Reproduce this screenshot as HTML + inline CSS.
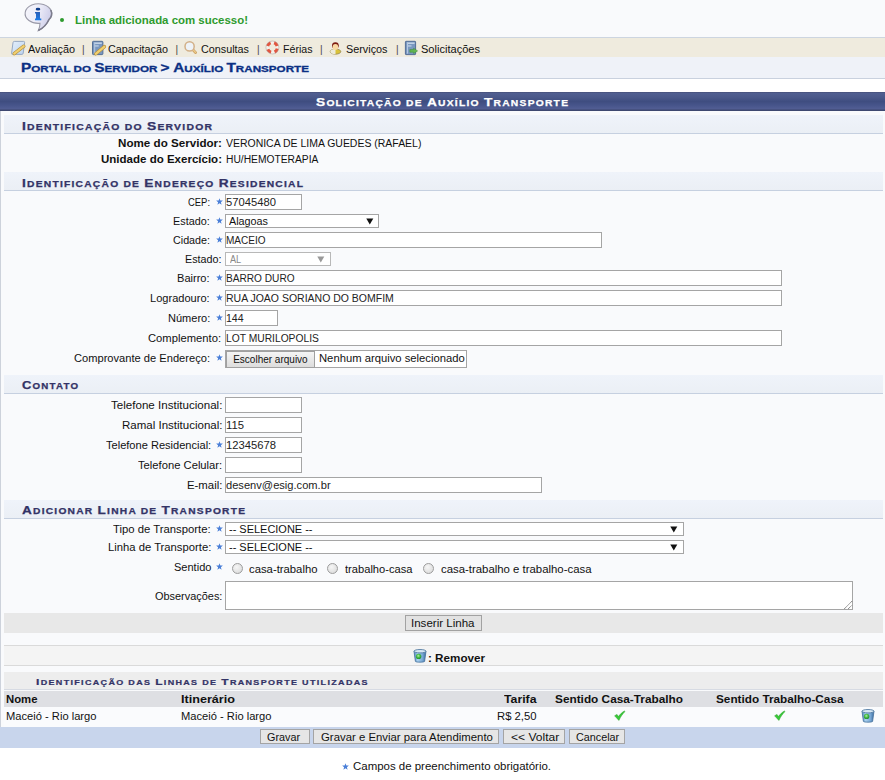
<!DOCTYPE html>
<html><head><meta charset="utf-8"><style>
html,body{margin:0;padding:0;}
body{width:885px;height:780px;overflow:hidden;position:relative;background:#fff;font-family:"Liberation Sans",sans-serif;}
.t{position:absolute;white-space:nowrap;}
</style></head><body>
<div style="position:absolute;left:0px;top:0px;width:885px;height:37px;background:#F9FAFC;"></div>
<div style="position:absolute;left:0px;top:37px;width:885px;height:1px;background:#CDD5E0;"></div>
<div style="position:absolute;left:60px;top:18px;width:4px;height:4px;background:#2E9A2E;border-radius:50%;"></div>
<div style="position:absolute;left:0px;top:38px;width:885px;height:19px;background:#EFEBDE;"></div>
<div style="position:absolute;left:0px;top:57px;width:885px;height:21px;background:#EFF2F8;"></div>
<div style="position:absolute;left:0px;top:78px;width:885px;height:1px;background:#C9D1DE;"></div>
<div style="position:absolute;left:0px;top:92px;width:885px;height:19px;background:linear-gradient(#465079 0px,#505E90 1.5px,#4B598A 5px,#3F4D80 9.5px,#46548A 13px,#505C92 16.5px,#3E4870 18.5px,#3E4870 19px);"></div>
<div style="position:absolute;left:0px;top:111px;width:885px;height:616px;background:#F9FAFC;"></div>
<div style="position:absolute;left:0px;top:111px;width:1px;height:616px;background:#CDD2DB;"></div>
<div style="position:absolute;left:4px;top:115px;width:879px;height:18px;background:linear-gradient(#EFF3FA,#EBEFF5);"></div>
<div style="position:absolute;left:4px;top:133px;width:879px;height:1px;background:#C6D0E0;"></div>
<div style="position:absolute;left:4px;top:172px;width:879px;height:18px;background:linear-gradient(#EFF3FA,#EBEFF5);"></div>
<div style="position:absolute;left:4px;top:190px;width:879px;height:1px;background:#C6D0E0;"></div>
<div style="position:absolute;left:225px;top:194px;width:77px;height:16px;background:#fff;border:1px solid #A5A5A5;box-sizing:border-box;"></div>
<div style="position:absolute;left:225px;top:214px;width:154px;height:14px;background:#fff;border:1px solid #A5A5A5;box-sizing:border-box;"></div>
<div style="position:absolute;left:225px;top:232px;width:377px;height:16px;background:#fff;border:1px solid #A5A5A5;box-sizing:border-box;"></div>
<div style="position:absolute;left:225px;top:252px;width:106px;height:14px;background:#fff;border:1px solid #B8B8B8;box-sizing:border-box;"></div>
<div style="position:absolute;left:225px;top:270px;width:557px;height:16px;background:#fff;border:1px solid #A5A5A5;box-sizing:border-box;"></div>
<div style="position:absolute;left:225px;top:290px;width:557px;height:16px;background:#fff;border:1px solid #A5A5A5;box-sizing:border-box;"></div>
<div style="position:absolute;left:225px;top:310px;width:53px;height:16px;background:#fff;border:1px solid #A5A5A5;box-sizing:border-box;"></div>
<div style="position:absolute;left:225px;top:330px;width:557px;height:16px;background:#fff;border:1px solid #A5A5A5;box-sizing:border-box;"></div>
<div style="position:absolute;left:225px;top:350px;width:242px;height:18px;background:#fff;border:1px solid #A5A5A5;box-sizing:border-box;"></div>
<div style="position:absolute;left:226px;top:351px;width:89px;height:17px;background:linear-gradient(#F4F4F4,#DDDDDD);border:1px solid #A0A0A0;box-sizing:border-box;"></div>
<div style="position:absolute;left:4px;top:375px;width:879px;height:18px;background:linear-gradient(#EFF3FA,#EBEFF5);"></div>
<div style="position:absolute;left:4px;top:393px;width:879px;height:1px;background:#C6D0E0;"></div>
<div style="position:absolute;left:225px;top:397px;width:77px;height:16px;background:#fff;border:1px solid #A5A5A5;box-sizing:border-box;"></div>
<div style="position:absolute;left:225px;top:417px;width:77px;height:16px;background:#fff;border:1px solid #A5A5A5;box-sizing:border-box;"></div>
<div style="position:absolute;left:225px;top:437px;width:77px;height:16px;background:#fff;border:1px solid #A5A5A5;box-sizing:border-box;"></div>
<div style="position:absolute;left:225px;top:457px;width:77px;height:16px;background:#fff;border:1px solid #A5A5A5;box-sizing:border-box;"></div>
<div style="position:absolute;left:225px;top:477px;width:317px;height:16px;background:#fff;border:1px solid #A5A5A5;box-sizing:border-box;"></div>
<div style="position:absolute;left:4px;top:500px;width:879px;height:18px;background:linear-gradient(#EFF3FA,#EBEFF5);"></div>
<div style="position:absolute;left:4px;top:518px;width:879px;height:1px;background:#C6D0E0;"></div>
<div style="position:absolute;left:225px;top:522px;width:459px;height:14px;background:#fff;border:1px solid #A5A5A5;box-sizing:border-box;"></div>
<div style="position:absolute;left:225px;top:540px;width:459px;height:14px;background:#fff;border:1px solid #A5A5A5;box-sizing:border-box;"></div>
<div style="position:absolute;left:225px;top:581px;width:628px;height:29px;background:#fff;border:1px solid #A5A5A5;box-sizing:border-box;"></div>
<div style="position:absolute;left:4px;top:613px;width:879px;height:20px;background:#E8E8E8;"></div>
<div style="position:absolute;left:405px;top:615px;width:77px;height:16px;background:#E2E2E2;border:1px solid #A2A2A2;box-sizing:border-box;"></div>
<div style="position:absolute;left:4px;top:645px;width:879px;height:1px;background:#DADADA;"></div>
<div style="position:absolute;left:4px;top:646px;width:879px;height:19px;background:#F4F4F4;"></div>
<div style="position:absolute;left:4px;top:665px;width:879px;height:1px;background:#DADADA;"></div>
<div style="position:absolute;left:4px;top:672px;width:879px;height:17px;background:#EDEDED;"></div>
<div style="position:absolute;left:4px;top:689px;width:879px;height:1px;background:#D7DBE3;"></div>
<div style="position:absolute;left:4px;top:691px;width:879px;height:16px;background:#DEDFE3;"></div>
<div style="position:absolute;left:4px;top:707px;width:879px;height:20px;background:#FAFBFD;"></div>
<div style="position:absolute;left:0px;top:727px;width:885px;height:21px;background:#C8D5EC;"></div>
<div style="position:absolute;left:260px;top:729px;width:50px;height:15px;background:#E6E6E6;border:1px solid #A4A4A4;box-sizing:border-box;"></div>
<div style="position:absolute;left:313px;top:729px;width:186px;height:15px;background:#E6E6E6;border:1px solid #A4A4A4;box-sizing:border-box;"></div>
<div style="position:absolute;left:503px;top:729px;width:62px;height:15px;background:#E6E6E6;border:1px solid #A4A4A4;box-sizing:border-box;"></div>
<div style="position:absolute;left:569px;top:729px;width:56px;height:15px;background:#E6E6E6;border:1px solid #A4A4A4;box-sizing:border-box;"></div>
<svg style="position:absolute;left:20px;top:0.5px" width="40" height="35" viewBox="0 0 40 35">
<defs><linearGradient id="ig" x1="0" y1="0" x2="1" y2="0.3"><stop offset="0" stop-color="#F6F6FC"/><stop offset="0.55" stop-color="#ECECF8"/><stop offset="1" stop-color="#CFCFEA"/></linearGradient>
<linearGradient id="ii" x1="0" y1="0" x2="0" y2="1"><stop offset="0" stop-color="#2A5FB8"/><stop offset="1" stop-color="#1C7BE6"/></linearGradient></defs>
<path d="M20 22.3 A13.3 9.8 0 1 1 29 18.5 C27 23 22.5 27.5 18.3 29.5 C19.5 27 20 24.5 20 22.3 Z" fill="url(#ig)" stroke="#9A9AA8" stroke-width="1.1"/>
<path d="M30.8 9 C32.5 12.5 31.5 16.5 29 18.5 C27 23 22.5 27.5 18.3 29.5" fill="none" stroke="#7C7C8C" stroke-width="1.6"/>
<ellipse cx="18" cy="8.2" rx="2.3" ry="1.4" fill="#0E3C8A"/>
<path d="M15 11 H20 V17.6 H21.3 V19.3 H15 V17.6 H16 V12.4 H15 Z" fill="url(#ii)"/>
</svg>
<svg style="position:absolute;left:8px;top:38px" width="40" height="20" viewBox="0 0 40 20"><defs><linearGradient id="p1" x1="0" y1="0" x2="1" y2="1"><stop offset="0" stop-color="#E6F0FB"/><stop offset="1" stop-color="#B9D2EE"/></linearGradient></defs>
<path d="M6.3 3.4 H15.6 Q16.8 3.4 16.6 4.6 L15.2 15.3 Q15 16.4 13.9 16.4 H4.6 Q3.4 16.4 3.6 15.2 L5 4.6 Q5.2 3.4 6.3 3.4 Z" fill="url(#p1)" stroke="#8CA0BE" stroke-width="0.9"/>
<path d="M6.2 15.6 L15.8 8.2" stroke="#B58F3A" stroke-width="3.4" stroke-linecap="round"/>
<path d="M6.2 15.6 L15.8 8.2" stroke="#F1D070" stroke-width="2.2" stroke-linecap="round"/></svg>
<svg style="position:absolute;left:88px;top:38px" width="40" height="20" viewBox="0 0 40 20"><rect x="4.5" y="3.3" width="10.4" height="13.3" rx="0.8" fill="#7A98C0" stroke="#4C6892" stroke-width="0.9"/>
<rect x="6.2" y="4.6" width="7.6" height="1.1" fill="#E2ECF7"/><rect x="6.2" y="7.4" width="4.5" height="1.1" fill="#C9D9EC"/><rect x="6.2" y="4.6" width="1" height="11" fill="#B5C9E2"/>
<path d="M7.8 15.8 L16.4 8.6" stroke="#B58F3A" stroke-width="3.4" stroke-linecap="round"/>
<path d="M7.8 15.8 L16.4 8.6" stroke="#F1D070" stroke-width="2.2" stroke-linecap="round"/></svg>
<svg style="position:absolute;left:180px;top:38px" width="40" height="20" viewBox="0 0 40 20"><path d="M12.8 11.6 L15.6 14.6" stroke="#C99A5A" stroke-width="2.8" stroke-linecap="round"/>
<path d="M12.8 11.6 L15.6 14.6" stroke="#EBCB8A" stroke-width="1.4" stroke-linecap="round"/>
<circle cx="9.6" cy="8.4" r="4.6" fill="#EEF3F8" stroke="#D2B088" stroke-width="1.5"/></svg>
<svg style="position:absolute;left:262px;top:38px" width="40" height="20" viewBox="0 0 40 20"><circle cx="10.4" cy="9.5" r="5" fill="none" stroke="#F4F0EA" stroke-width="3"/>
<circle cx="10.4" cy="9.5" r="5" fill="none" stroke="#E2553F" stroke-width="3.1" stroke-dasharray="4.2 3.65" stroke-dashoffset="-1.2"/>
<circle cx="10.4" cy="9.5" r="6.5" fill="none" stroke="#A89C98" stroke-width="0.5"/></svg>
<svg style="position:absolute;left:326px;top:38px" width="40" height="20" viewBox="0 0 40 20"><ellipse cx="9.5" cy="13.6" rx="5.3" ry="2.6" fill="#D9C23A" stroke="#8C8050" stroke-width="0.7"/>
<path d="M4.3 13.6 A5.3 2.6 0 0 0 9.5 16.2 V11 A5.3 2.6 0 0 0 4.3 13.6 Z" fill="#EDEBDC"/>
<circle cx="9.4" cy="7.6" r="3.4" fill="#7E1C12"/>
<ellipse cx="9.4" cy="9" rx="2.8" ry="3" fill="#F9D9A2"/></svg>
<svg style="position:absolute;left:400px;top:38px" width="40" height="20" viewBox="0 0 40 20"><rect x="5.4" y="3.3" width="10.2" height="13.3" rx="0.6" fill="#7A98C0" stroke="#4A6590" stroke-width="0.9"/>
<rect x="7" y="4.6" width="7.6" height="1.1" fill="#E2ECF7"/><rect x="7" y="7.4" width="4.5" height="1.1" fill="#C9D9EC"/><rect x="7" y="4.6" width="1" height="11" fill="#B5C9E2"/>
<path d="M9.8 11.6 H13.6 V10.2 L17.6 12.9 L13.6 15.6 V14.2 H9.8 Z" fill="#63B652" stroke="#3D8C34" stroke-width="0.5"/></svg>
<svg style="position:absolute;left:216px;top:198px" width="7" height="7" viewBox="0 0 10 10"><path d="M5 0.3 L6.2 3.6 L9.8 3.7 L7 5.9 L8 9.5 L5 7.4 L2 9.5 L3 5.9 L0.2 3.7 L3.8 3.6 Z" fill="#4A7FD8"/></svg>
<svg style="position:absolute;left:216px;top:217px" width="7" height="7" viewBox="0 0 10 10"><path d="M5 0.3 L6.2 3.6 L9.8 3.7 L7 5.9 L8 9.5 L5 7.4 L2 9.5 L3 5.9 L0.2 3.7 L3.8 3.6 Z" fill="#4A7FD8"/></svg>
<svg style="position:absolute;left:366px;top:217.5px" width="8" height="7" viewBox="0 0 8 7"><path d="M0.3 0.6 H7.3 L3.8 6.6 Z" fill="#111"/></svg>
<svg style="position:absolute;left:216px;top:236px" width="7" height="7" viewBox="0 0 10 10"><path d="M5 0.3 L6.2 3.6 L9.8 3.7 L7 5.9 L8 9.5 L5 7.4 L2 9.5 L3 5.9 L0.2 3.7 L3.8 3.6 Z" fill="#4A7FD8"/></svg>
<svg style="position:absolute;left:317px;top:255.5px" width="8" height="7" viewBox="0 0 8 7"><path d="M0.3 0.6 H7.3 L3.8 6.6 Z" fill="#999"/></svg>
<svg style="position:absolute;left:216px;top:274px" width="7" height="7" viewBox="0 0 10 10"><path d="M5 0.3 L6.2 3.6 L9.8 3.7 L7 5.9 L8 9.5 L5 7.4 L2 9.5 L3 5.9 L0.2 3.7 L3.8 3.6 Z" fill="#4A7FD8"/></svg>
<svg style="position:absolute;left:216px;top:294px" width="7" height="7" viewBox="0 0 10 10"><path d="M5 0.3 L6.2 3.6 L9.8 3.7 L7 5.9 L8 9.5 L5 7.4 L2 9.5 L3 5.9 L0.2 3.7 L3.8 3.6 Z" fill="#4A7FD8"/></svg>
<svg style="position:absolute;left:216px;top:314px" width="7" height="7" viewBox="0 0 10 10"><path d="M5 0.3 L6.2 3.6 L9.8 3.7 L7 5.9 L8 9.5 L5 7.4 L2 9.5 L3 5.9 L0.2 3.7 L3.8 3.6 Z" fill="#4A7FD8"/></svg>
<svg style="position:absolute;left:216px;top:354px" width="7" height="7" viewBox="0 0 10 10"><path d="M5 0.3 L6.2 3.6 L9.8 3.7 L7 5.9 L8 9.5 L5 7.4 L2 9.5 L3 5.9 L0.2 3.7 L3.8 3.6 Z" fill="#4A7FD8"/></svg>
<svg style="position:absolute;left:216px;top:441px" width="7" height="7" viewBox="0 0 10 10"><path d="M5 0.3 L6.2 3.6 L9.8 3.7 L7 5.9 L8 9.5 L5 7.4 L2 9.5 L3 5.9 L0.2 3.7 L3.8 3.6 Z" fill="#4A7FD8"/></svg>
<svg style="position:absolute;left:216px;top:525px" width="7" height="7" viewBox="0 0 10 10"><path d="M5 0.3 L6.2 3.6 L9.8 3.7 L7 5.9 L8 9.5 L5 7.4 L2 9.5 L3 5.9 L0.2 3.7 L3.8 3.6 Z" fill="#4A7FD8"/></svg>
<svg style="position:absolute;left:670px;top:525.5px" width="8" height="7" viewBox="0 0 8 7"><path d="M0.3 0.6 H7.3 L3.8 6.6 Z" fill="#111"/></svg>
<svg style="position:absolute;left:216px;top:543px" width="7" height="7" viewBox="0 0 10 10"><path d="M5 0.3 L6.2 3.6 L9.8 3.7 L7 5.9 L8 9.5 L5 7.4 L2 9.5 L3 5.9 L0.2 3.7 L3.8 3.6 Z" fill="#4A7FD8"/></svg>
<svg style="position:absolute;left:670px;top:543.5px" width="8" height="7" viewBox="0 0 8 7"><path d="M0.3 0.6 H7.3 L3.8 6.6 Z" fill="#111"/></svg>
<svg style="position:absolute;left:216px;top:563px" width="7" height="7" viewBox="0 0 10 10"><path d="M5 0.3 L6.2 3.6 L9.8 3.7 L7 5.9 L8 9.5 L5 7.4 L2 9.5 L3 5.9 L0.2 3.7 L3.8 3.6 Z" fill="#4A7FD8"/></svg>
<div style="position:absolute;left:231.5px;top:562.5px;width:11px;height:11px;border-radius:50%;box-sizing:border-box;border:1px solid #9C9C9C;background:radial-gradient(circle at 40% 35%,#F6F6F6,#D6D6D6);"></div>
<div style="position:absolute;left:327.0px;top:562.5px;width:11px;height:11px;border-radius:50%;box-sizing:border-box;border:1px solid #9C9C9C;background:radial-gradient(circle at 40% 35%,#F6F6F6,#D6D6D6);"></div>
<div style="position:absolute;left:423.0px;top:562.5px;width:11px;height:11px;border-radius:50%;box-sizing:border-box;border:1px solid #9C9C9C;background:radial-gradient(circle at 40% 35%,#F6F6F6,#D6D6D6);"></div>
<svg style="position:absolute;left:843px;top:598px" width="10" height="12" viewBox="0 0 10 12"><path d="M1.4 10.8 L8.9 3.2 M5.3 10.8 L8.9 7.2" stroke="#444" stroke-width="0.9" stroke-dasharray="1 0.6"/></svg>
<svg style="position:absolute;left:413px;top:649px" width="14" height="14" viewBox="0 0 14 14">
<defs><linearGradient id="tg413" x1="0" x2="1"><stop offset="0" stop-color="#4F86BC"/><stop offset="0.3" stop-color="#A9D0EE"/><stop offset="0.7" stop-color="#7AA9D6"/><stop offset="1" stop-color="#3A6C9F"/></linearGradient>
<radialGradient id="gg413" cx="0.45" cy="0.4" r="0.6"><stop offset="0" stop-color="#B6F0A8"/><stop offset="0.5" stop-color="#4CC04A"/><stop offset="1" stop-color="#1E8A2A"/></radialGradient></defs>
<path d="M1 2.2 L2.4 12.4 C2.6 13.4 11.4 13.4 11.6 12.4 L13 2.2 Z" fill="url(#tg413)" stroke="#44709A" stroke-width="0.8"/>
<ellipse cx="7" cy="2.2" rx="6" ry="1.7" fill="#D8E8F4" stroke="#44709A" stroke-width="0.8"/>
<circle cx="5.6" cy="7.4" r="2.7" fill="url(#gg413)"/>
</svg>
<svg style="position:absolute;left:614px;top:710px" width="12" height="11" viewBox="0 0 12 11"><path d="M0.6 5.8 L3 4.4 L4.4 6.6 C6.3 4 8.2 2.2 10.4 1 L11 1.6 C8.8 3.6 6.8 6.4 4.9 10.4 Z" fill="#38C838" stroke="#26A026" stroke-width="0.5"/></svg>
<svg style="position:absolute;left:774px;top:710px" width="12" height="11" viewBox="0 0 12 11"><path d="M0.6 5.8 L3 4.4 L4.4 6.6 C6.3 4 8.2 2.2 10.4 1 L11 1.6 C8.8 3.6 6.8 6.4 4.9 10.4 Z" fill="#38C838" stroke="#26A026" stroke-width="0.5"/></svg>
<svg style="position:absolute;left:861px;top:709px" width="14" height="14" viewBox="0 0 14 14">
<defs><linearGradient id="tg861" x1="0" x2="1"><stop offset="0" stop-color="#4F86BC"/><stop offset="0.3" stop-color="#A9D0EE"/><stop offset="0.7" stop-color="#7AA9D6"/><stop offset="1" stop-color="#3A6C9F"/></linearGradient>
<radialGradient id="gg861" cx="0.45" cy="0.4" r="0.6"><stop offset="0" stop-color="#B6F0A8"/><stop offset="0.5" stop-color="#4CC04A"/><stop offset="1" stop-color="#1E8A2A"/></radialGradient></defs>
<path d="M1 2.2 L2.4 12.4 C2.6 13.4 11.4 13.4 11.6 12.4 L13 2.2 Z" fill="url(#tg861)" stroke="#44709A" stroke-width="0.8"/>
<ellipse cx="7" cy="2.2" rx="6" ry="1.7" fill="#D8E8F4" stroke="#44709A" stroke-width="0.8"/>
<circle cx="5.6" cy="7.4" r="2.7" fill="url(#gg861)"/>
</svg>
<svg style="position:absolute;left:342px;top:763px" width="7" height="7" viewBox="0 0 10 10"><path d="M5 0.3 L6.2 3.6 L9.8 3.7 L7 5.9 L8 9.5 L5 7.4 L2 9.5 L3 5.9 L0.2 3.7 L3.8 3.6 Z" fill="#4A7FD8"/></svg>
<span class="t" id="t0" style="left:75.00px;transform:scaleX(1.1445);transform-origin:0 0;top:14.95px;font-size:10px;line-height:11.170px;font-weight:bold;color:#2E9A2E;">Linha adicionada com sucesso!</span>
<span class="t" id="t1" style="left:28.00px;transform:scaleX(1.0883);transform-origin:0 0;top:43.95px;font-size:10px;line-height:11.170px;font-weight:normal;color:#111;">Avaliação</span>
<span class="t" id="t2" style="left:108.00px;transform:scaleX(1.0793);transform-origin:0 0;top:43.95px;font-size:10px;line-height:11.170px;font-weight:normal;color:#111;">Capacitação</span>
<span class="t" id="t3" style="left:201.00px;transform:scaleX(1.0794);transform-origin:0 0;top:43.95px;font-size:10px;line-height:11.170px;font-weight:normal;color:#111;">Consultas</span>
<span class="t" id="t4" style="left:283.00px;transform:scaleX(1.0613);transform-origin:0 0;top:43.95px;font-size:10px;line-height:11.170px;font-weight:normal;color:#111;">Férias</span>
<span class="t" id="t5" style="left:346.00px;transform:scaleX(1.0819);transform-origin:0 0;top:43.95px;font-size:10px;line-height:11.170px;font-weight:normal;color:#111;">Serviços</span>
<span class="t" id="t6" style="left:421.00px;transform:scaleX(1.1057);transform-origin:0 0;top:43.95px;font-size:10px;line-height:11.170px;font-weight:normal;color:#111;">Solicitações</span>
<span class="t" id="t7" style="left:82.00px;top:43.95px;font-size:10px;line-height:11.170px;font-weight:normal;color:#444;">|</span>
<span class="t" id="t8" style="left:175.50px;top:43.95px;font-size:10px;line-height:11.170px;font-weight:normal;color:#444;">|</span>
<span class="t" id="t9" style="left:257.00px;top:43.95px;font-size:10px;line-height:11.170px;font-weight:normal;color:#444;">|</span>
<span class="t" id="t10" style="left:320.00px;top:43.95px;font-size:10px;line-height:11.170px;font-weight:normal;color:#444;">|</span>
<span class="t" id="t11" style="left:396.00px;top:43.95px;font-size:10px;line-height:11.170px;font-weight:normal;color:#444;">|</span>
<span class="t" id="t12" style="left:21.00px;transform:scaleX(1.2789);transform-origin:0 0;top:62.44px;font-size:12px;line-height:13.404px;font-weight:bold;color:#0A2F84;-webkit-text-stroke:0.3px #0A2F84;">P<span style="font-size:0.76em">ORTAL DO </span>S<span style="font-size:0.76em">ERVIDOR </span>&gt; A<span style="font-size:0.76em">UXÍLIO </span>T<span style="font-size:0.76em">RANSPORTE</span></span>
<span class="t" id="t13" style="left:316.00px;transform:scaleX(1.2451);transform-origin:0 0;top:96.05px;font-size:11px;line-height:12.287px;font-weight:bold;color:#FFFFFF;letter-spacing:1px;-webkit-text-stroke:0.25px #fff;">S<span style="font-size:0.75em">OLICITAÇÃO DE </span>A<span style="font-size:0.75em">UXÍLIO </span>T<span style="font-size:0.75em">RANSPORTE</span></span>
<span class="t" id="t14" style="left:22.00px;transform:scaleX(1.2570);transform-origin:0 0;top:119.74px;font-size:11px;line-height:12.287px;font-weight:bold;color:#333366;letter-spacing:1px;-webkit-text-stroke:0.25px #333366;">I<span style="font-size:0.75em">DENTIFICAÇÃO DO </span>S<span style="font-size:0.75em">ERVIDOR</span></span>
<span class="t" id="t15" style="left:118.00px;transform:scaleX(1.1624);transform-origin:0 0;top:137.95px;font-size:10px;line-height:11.170px;font-weight:bold;color:#111;">Nome do Servidor:</span>
<span class="t" id="t16" style="left:225.60px;transform:scaleX(1.0465);transform-origin:0 0;top:137.95px;font-size:10px;line-height:11.170px;font-weight:normal;color:#111;">VERONICA DE LIMA GUEDES (RAFAEL)</span>
<span class="t" id="t17" style="left:101.00px;transform:scaleX(1.1520);transform-origin:0 0;top:153.95px;font-size:10px;line-height:11.170px;font-weight:bold;color:#111;">Unidade do Exercício:</span>
<span class="t" id="t18" style="left:225.60px;transform:scaleX(1.0265);transform-origin:0 0;top:153.95px;font-size:10px;line-height:11.170px;font-weight:normal;color:#111;">HU/HEMOTERAPIA</span>
<span class="t" id="t19" style="left:22.00px;transform:scaleX(1.2420);transform-origin:0 0;top:177.24px;font-size:11px;line-height:12.287px;font-weight:bold;color:#333366;letter-spacing:1px;-webkit-text-stroke:0.25px #333366;">I<span style="font-size:0.75em">DENTIFICAÇÃO DE </span>E<span style="font-size:0.75em">NDEREÇO </span>R<span style="font-size:0.75em">ESIDENCIAL</span></span>
<span class="t" id="t20" style="left:188.00px;transform:scaleX(0.9424);transform-origin:0 0;top:196.95px;font-size:10px;line-height:11.170px;font-weight:normal;color:#111;">CEP:</span>
<span class="t" id="t21" style="left:226.40px;transform:scaleX(1.1213);transform-origin:0 0;top:197.25px;font-size:10px;line-height:11.170px;font-weight:normal;color:#222;">57045480</span>
<span class="t" id="t22" style="left:173.30px;transform:scaleX(1.0819);transform-origin:0 0;top:215.95px;font-size:10px;line-height:11.170px;font-weight:normal;color:#111;">Estado:</span>
<span class="t" id="t23" style="left:228.80px;transform:scaleX(1.0791);transform-origin:0 0;top:215.95px;font-size:10px;line-height:11.170px;font-weight:normal;color:#111;">Alagoas</span>
<span class="t" id="t24" style="left:173.00px;transform:scaleX(1.0734);transform-origin:0 0;top:234.95px;font-size:10px;line-height:11.170px;font-weight:normal;color:#111;">Cidade:</span>
<span class="t" id="t25" style="left:226.40px;transform:scaleX(1.0037);transform-origin:0 0;top:234.95px;font-size:10px;line-height:11.170px;font-weight:normal;color:#222;">MACEIO</span>
<span class="t" id="t26" style="left:184.60px;transform:scaleX(1.0731);transform-origin:0 0;top:253.95px;font-size:10px;line-height:11.170px;font-weight:normal;color:#111;">Estado:</span>
<span class="t" id="t27" style="left:229.50px;transform:scaleX(0.9155);transform-origin:0 0;top:253.95px;font-size:10px;line-height:11.170px;font-weight:normal;color:#888;">AL</span>
<span class="t" id="t28" style="left:177.40px;transform:scaleX(1.1068);transform-origin:0 0;top:272.95px;font-size:10px;line-height:11.170px;font-weight:normal;color:#111;">Bairro:</span>
<span class="t" id="t29" style="left:226.40px;transform:scaleX(1.0118);transform-origin:0 0;top:272.95px;font-size:10px;line-height:11.170px;font-weight:normal;color:#222;">BARRO DURO</span>
<span class="t" id="t30" style="left:150.30px;transform:scaleX(1.1068);transform-origin:0 0;top:292.95px;font-size:10px;line-height:11.170px;font-weight:normal;color:#111;">Logradouro:</span>
<span class="t" id="t31" style="left:226.40px;transform:scaleX(1.0486);transform-origin:0 0;top:292.95px;font-size:10px;line-height:11.170px;font-weight:normal;color:#222;">RUA JOAO SORIANO DO BOMFIM</span>
<span class="t" id="t32" style="left:167.70px;transform:scaleX(1.1027);transform-origin:0 0;top:312.95px;font-size:10px;line-height:11.170px;font-weight:normal;color:#111;">Número:</span>
<span class="t" id="t33" style="left:226.40px;transform:scaleX(1.0547);transform-origin:0 0;top:312.95px;font-size:10px;line-height:11.170px;font-weight:normal;color:#222;">144</span>
<span class="t" id="t34" style="left:148.00px;transform:scaleX(1.1225);transform-origin:0 0;top:332.95px;font-size:10px;line-height:11.170px;font-weight:normal;color:#111;">Complemento:</span>
<span class="t" id="t35" style="left:226.40px;transform:scaleX(1.0276);transform-origin:0 0;top:332.95px;font-size:10px;line-height:11.170px;font-weight:normal;color:#222;">LOT MURILOPOLIS</span>
<span class="t" id="t36" style="left:74.00px;transform:scaleX(1.1120);transform-origin:0 0;top:353.45px;font-size:10px;line-height:11.170px;font-weight:normal;color:#111;">Comprovante de Endereço:</span>
<span class="t" id="t37" style="left:233.20px;top:354.45px;font-size:10px;line-height:11.170px;font-weight:normal;color:#111;">Escolher arquivo</span>
<span class="t" id="t38" style="left:319.30px;transform:scaleX(1.0712);transform-origin:0 0;top:352.50px;font-size:10.5px;line-height:11.729px;font-weight:normal;color:#111;">Nenhum arquivo selecionado</span>
<span class="t" id="t39" style="left:22.00px;transform:scaleX(1.1809);transform-origin:0 0;top:379.35px;font-size:11px;line-height:12.287px;font-weight:bold;color:#333366;letter-spacing:1px;-webkit-text-stroke:0.25px #333366;">C<span style="font-size:0.75em">ONTATO</span></span>
<span class="t" id="t40" style="left:110.60px;transform:scaleX(1.1583);transform-origin:0 0;top:399.95px;font-size:10px;line-height:11.170px;font-weight:normal;color:#111;">Telefone Institucional:</span>
<span class="t" id="t41" style="left:121.50px;transform:scaleX(1.1517);transform-origin:0 0;top:419.95px;font-size:10px;line-height:11.170px;font-weight:normal;color:#111;">Ramal Institucional:</span>
<span class="t" id="t42" style="left:226.40px;transform:scaleX(1.1283);transform-origin:0 0;top:419.95px;font-size:10px;line-height:11.170px;font-weight:normal;color:#222;">115</span>
<span class="t" id="t43" style="left:105.80px;transform:scaleX(1.1066);transform-origin:0 0;top:439.95px;font-size:10px;line-height:11.170px;font-weight:normal;color:#111;">Telefone Residencial:</span>
<span class="t" id="t44" style="left:226.40px;transform:scaleX(1.1236);transform-origin:0 0;top:439.95px;font-size:10px;line-height:11.170px;font-weight:normal;color:#222;">12345678</span>
<span class="t" id="t45" style="left:137.80px;transform:scaleX(1.1220);transform-origin:0 0;top:459.95px;font-size:10px;line-height:11.170px;font-weight:normal;color:#111;">Telefone Celular:</span>
<span class="t" id="t46" style="left:186.60px;transform:scaleX(1.1373);transform-origin:0 0;top:479.95px;font-size:10px;line-height:11.170px;font-weight:normal;color:#111;">E-mail:</span>
<span class="t" id="t47" style="left:226.40px;transform:scaleX(1.1117);transform-origin:0 0;top:479.95px;font-size:10px;line-height:11.170px;font-weight:normal;color:#222;">desenv@esig.com.br</span>
<span class="t" id="t48" style="left:22.00px;transform:scaleX(1.2374);transform-origin:0 0;top:504.45px;font-size:11px;line-height:12.287px;font-weight:bold;color:#333366;letter-spacing:1px;-webkit-text-stroke:0.25px #333366;">A<span style="font-size:0.75em">DICIONAR </span>L<span style="font-size:0.75em">INHA DE </span>T<span style="font-size:0.75em">RANSPORTE</span></span>
<span class="t" id="t49" style="left:113.40px;transform:scaleX(1.1304);transform-origin:0 0;top:524.25px;font-size:10px;line-height:11.170px;font-weight:normal;color:#111;">Tipo de Transporte:</span>
<span class="t" id="t50" style="left:229.00px;transform:scaleX(1.0969);transform-origin:0 0;top:523.95px;font-size:10px;line-height:11.170px;font-weight:normal;color:#111;">-- SELECIONE --</span>
<span class="t" id="t51" style="left:107.70px;transform:scaleX(1.1261);transform-origin:0 0;top:541.95px;font-size:10px;line-height:11.170px;font-weight:normal;color:#111;">Linha de Transporte:</span>
<span class="t" id="t52" style="left:229.00px;transform:scaleX(1.0969);transform-origin:0 0;top:541.95px;font-size:10px;line-height:11.170px;font-weight:normal;color:#111;">-- SELECIONE --</span>
<span class="t" id="t53" style="left:173.60px;transform:scaleX(1.1025);transform-origin:0 0;top:562.15px;font-size:10px;line-height:11.170px;font-weight:normal;color:#111;">Sentido</span>
<span class="t" id="t54" style="left:249.00px;transform:scaleX(1.1305);transform-origin:0 0;top:564.25px;font-size:10px;line-height:11.170px;font-weight:normal;color:#111;">casa-trabalho</span>
<span class="t" id="t55" style="left:345.00px;transform:scaleX(1.1140);transform-origin:0 0;top:564.25px;font-size:10px;line-height:11.170px;font-weight:normal;color:#111;">trabalho-casa</span>
<span class="t" id="t56" style="left:441.00px;transform:scaleX(1.1375);transform-origin:0 0;top:564.25px;font-size:10px;line-height:11.170px;font-weight:normal;color:#111;">casa-trabalho e trabalho-casa</span>
<span class="t" id="t57" style="left:154.60px;transform:scaleX(1.0923);transform-origin:0 0;top:590.65px;font-size:10px;line-height:11.170px;font-weight:normal;color:#111;">Observações:</span>
<span class="t" id="t58" style="left:411.00px;transform:scaleX(1.1539);transform-origin:0 0;top:617.95px;font-size:10px;line-height:11.170px;font-weight:normal;color:#111;">Inserir Linha</span>
<span class="t" id="t59" style="left:428.00px;transform:scaleX(1.1655);transform-origin:0 0;top:652.95px;font-size:10px;line-height:11.170px;font-weight:bold;color:#111;">: Remover</span>
<span class="t" id="t60" style="left:36.00px;transform:scaleX(1.3312);transform-origin:0 0;top:677.06px;font-size:9px;line-height:10.053px;font-weight:bold;color:#333366;letter-spacing:1px;-webkit-text-stroke:0.2px #333366;">I<span style="font-size:0.75em">DENTIFICAÇÃO DAS </span>L<span style="font-size:0.75em">INHAS DE </span>T<span style="font-size:0.75em">RANSPORTE UTILIZADAS</span></span>
<span class="t" id="t61" style="left:6.00px;transform:scaleX(1.1332);transform-origin:0 0;top:694.45px;font-size:10px;line-height:11.170px;font-weight:bold;color:#111;">Nome</span>
<span class="t" id="t62" style="left:181.00px;transform:scaleX(1.2618);transform-origin:0 0;top:694.45px;font-size:10px;line-height:11.170px;font-weight:bold;color:#111;">Itinerário</span>
<span class="t" id="t63" style="left:504.00px;transform:scaleX(1.2264);transform-origin:0 0;top:694.45px;font-size:10px;line-height:11.170px;font-weight:bold;color:#111;">Tarifa</span>
<span class="t" id="t64" style="left:555.00px;transform:scaleX(1.1813);transform-origin:0 0;top:694.45px;font-size:10px;line-height:11.170px;font-weight:bold;color:#111;">Sentido Casa-Trabalho</span>
<span class="t" id="t65" style="left:715.50px;transform:scaleX(1.1766);transform-origin:0 0;top:694.45px;font-size:10px;line-height:11.170px;font-weight:bold;color:#111;">Sentido Trabalho-Casa</span>
<span class="t" id="t66" style="left:6.00px;transform:scaleX(1.1151);transform-origin:0 0;top:711.45px;font-size:10px;line-height:11.170px;font-weight:normal;color:#111;">Maceió - Rio largo</span>
<span class="t" id="t67" style="left:181.00px;transform:scaleX(1.1151);transform-origin:0 0;top:711.45px;font-size:10px;line-height:11.170px;font-weight:normal;color:#111;">Maceió - Rio largo</span>
<span class="t" id="t68" style="left:497.00px;transform:scaleX(1.1276);transform-origin:0 0;top:711.45px;font-size:10px;line-height:11.170px;font-weight:normal;color:#111;">R$ 2,50</span>
<span class="t" id="t69" style="left:267.00px;transform:scaleX(1.0798);transform-origin:0 0;top:731.55px;font-size:10px;line-height:11.170px;font-weight:normal;color:#111;">Gravar</span>
<span class="t" id="t70" style="left:320.80px;transform:scaleX(1.1369);transform-origin:0 0;top:731.55px;font-size:10px;line-height:11.170px;font-weight:normal;color:#111;">Gravar e Enviar para Atendimento</span>
<span class="t" id="t71" style="left:510.50px;transform:scaleX(1.2066);transform-origin:0 0;top:731.55px;font-size:10px;line-height:11.170px;font-weight:normal;color:#111;">&lt;&lt; Voltar</span>
<span class="t" id="t72" style="left:575.80px;transform:scaleX(1.0792);transform-origin:0 0;top:731.55px;font-size:10px;line-height:11.170px;font-weight:normal;color:#111;">Cancelar</span>
<span class="t" id="t73" style="left:352.50px;transform:scaleX(1.1452);transform-origin:0 0;top:761.45px;font-size:10px;line-height:11.170px;font-weight:normal;color:#111;">Campos de preenchimento obrigatório.</span>
</body></html>
